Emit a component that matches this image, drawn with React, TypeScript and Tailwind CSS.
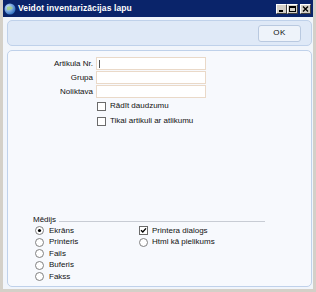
import React from "react";

const font = { fontFamily: '"Liberation Sans", Arial, sans-serif' };

function Radio({ checked }: { checked?: boolean }) {
  return (
    <svg width="9" height="9" viewBox="0 0 9 9" className="shrink-0">
      <circle cx="4.5" cy="4.5" r="4" fill="#fff" stroke="#808080" strokeWidth="1" />
      {checked && <circle cx="4.5" cy="4.5" r="1.6" fill="#000" />}
    </svg>
  );
}

function Check({ checked }: { checked?: boolean }) {
  return (
    <div className="w-[9px] h-[9px] border border-[#6b6b6b] bg-white shrink-0 flex items-center justify-center">
      {checked && (
        <svg width="7" height="7" viewBox="0 0 7 7">
          <path d="M1 3.2 L2.8 5 L6 1.4" stroke="#000" strokeWidth="1.4" fill="none" />
        </svg>
      )}
    </div>
  );
}

function TitleBtn({ kind }: { kind: "min" | "max" | "close" }) {
  return (
    <div className="w-[11px] h-[10px] bg-[#d4d0c8] border-t border-l border-t-white border-l-white border-b border-r border-b-[#404040] border-r-[#404040] flex items-center justify-center">
      <svg width="7" height="6" viewBox="0 0 7 6">
        {kind === "min" && <rect x="1" y="4" width="4" height="2" fill="#000" />}
        {kind === "max" && (
          <>
            <rect x="0.5" y="0.5" width="6" height="5" fill="none" stroke="#000" />
            <rect x="0" y="0" width="7" height="2" fill="#000" />
          </>
        )}
        {kind === "close" && (
          <path d="M1 0.5 L6 5.5 M6 0.5 L1 5.5" stroke="#000" strokeWidth="1.4" />
        )}
      </svg>
    </div>
  );
}

export default function App() {
  return (
    <div
      className="w-[316px] h-[292px] bg-[#d4d0c8] px-[3px] pb-[3px] flex flex-col text-[8px] text-[#111]"
      style={font}
    >
      <div className="h-[17px] bg-[#0a246a] flex items-center pl-[1px] pr-[2px] shrink-0">
        <svg width="12" height="12" viewBox="0 0 12 12" className="mr-[2px]">
          <defs>
            <radialGradient id="g" cx="0.35" cy="0.35" r="0.7">
              <stop offset="0" stopColor="#cfe4ff" />
              <stop offset="1" stopColor="#2d6fc0" />
            </radialGradient>
          </defs>
          <circle cx="6" cy="6" r="5.5" fill="url(#g)" />
          <path d="M3 4 Q6 2 9 5 Q6 8 3 7 Z" fill="#9fd07a" opacity="0.8" />
        </svg>
        <span className="text-white font-bold text-[8.5px] tracking-[0.1px]">Veidot inventarizācijas lapu</span>
        <div className="ml-auto flex">
          <TitleBtn kind="min" />
          <TitleBtn kind="max" />
          <div className="w-[2px]" />
          <TitleBtn kind="close" />
        </div>
      </div>
      <div className="flex-1 bg-[#f1f5fb] pl-[4px] pr-[1px] pt-[3px] pb-[2px] flex flex-col gap-[4px]">
        <div className="h-[26px] rounded-[5px] border border-[#bfd1ea] bg-[#dfe9f7] flex items-center justify-end pr-[10px]">
          <div className="w-[43px] h-[17px] rounded-[3px] border border-[#b9c9e0] bg-[#eef3fa] flex items-center justify-center text-[8px] tracking-[0.5px]">
            OK
          </div>
        </div>
        <div className="flex-1 rounded-[5px] border border-[#bfd1ea] bg-[#f7f9fd] flex flex-col pt-[6px]">
          <div className="grid grid-cols-[85px_110px] gap-x-[3px] gap-y-[1px] items-center">
            <div className="text-right">Artikula Nr.</div>
            <div className="h-[13px] border border-[#ead9c8] bg-white flex items-center pl-[2px]">
              <div className="w-[1px] h-[8px] bg-[#555]" />
            </div>
            <div className="text-right">Grupa</div>
            <div className="h-[13px] border border-[#ead9c8] bg-white" />
            <div className="text-right">Noliktava</div>
            <div className="h-[13px] border border-[#ead9c8] bg-white" />
          </div>
          <div className="flex flex-col gap-[3px] pl-[89px] pt-[2px]">
            <div className="flex items-center gap-[4px]">
              <Check />
              <span>Rādīt daudzumu</span>
            </div>
            <div className="flex items-center gap-[4px]">
              <Check />
              <span>Tikai artikuli ar atlikumu</span>
            </div>
          </div>
          <div className="flex-1" />
          <div className="flex items-center pl-[25px] pr-[46px]">
            <span>Mēdijs</span>
            <div className="flex-1 h-px bg-[#c8ccd4] ml-[3px] mt-[2px]" />
          </div>
          <div className="flex pl-[27px] pb-[5px]">
            <div className="w-[104px] flex flex-col gap-[2.5px]">
              {["Ekrāns", "Printeris", "Fails", "Buferis", "Fakss"].map((t, i) => (
                <div key={t} className="flex items-center gap-[5px] h-[9px]">
                  <Radio checked={i === 0} />
                  <span>{t}</span>
                </div>
              ))}
            </div>
            <div className="flex flex-col gap-[2.5px]">
              <div className="flex items-center gap-[4px] h-[9px]">
                <Check checked />
                <span>Printera dialogs</span>
              </div>
              <div className="flex items-center gap-[4px] h-[9px]">
                <Radio />
                <span>Html kā pielikums</span>
              </div>
            </div>
          </div>
        </div>
      </div>
    </div>
  );
}
